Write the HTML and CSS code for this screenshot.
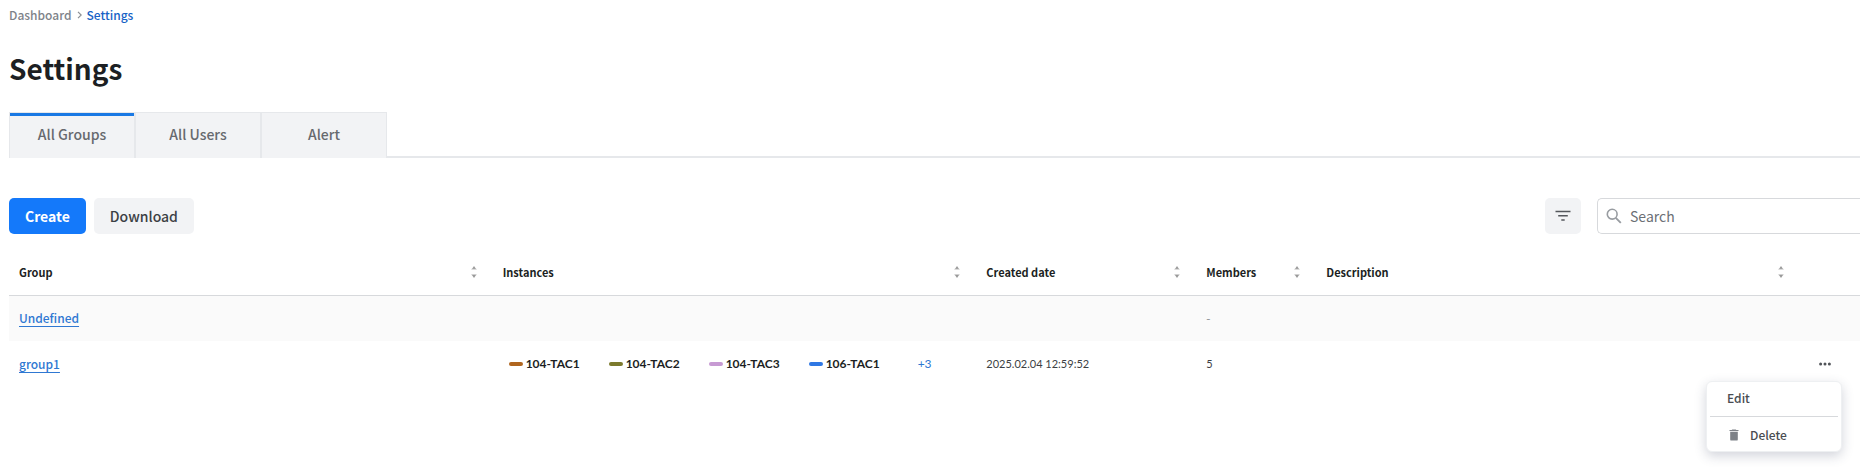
FILE: index.html
```html
<!DOCTYPE html>
<html lang="en">
<head>
<meta charset="utf-8">
<meta name="viewport" content="width=device-width, initial-scale=1">
<title>Settings</title>
<link rel="stylesheet" href="styles.css">
</head>
<body>
<svg class="sprite" aria-hidden="true">
  <symbol id="sort" viewBox="0 0 6 12"><path d="M3 0 5.2 3.2H.8Z" fill="#999"/><path d="M.2 3.3h5.6M.2 8.7h5.6" stroke="#d4d4d4" stroke-width=".8"/><path d="M.8 8.8h4.4L3 12Z" fill="#999"/></symbol>
</svg>
<main class="page">
  <nav class="breadcrumb" aria-label="Breadcrumb">
    <a class="crumb" href="#">Dashboard</a>
    <svg class="chevron" viewBox="0 0 5 8" aria-hidden="true"><path d="M1 .8 4.2 4 1 7.2" fill="none" stroke="#8b8f94" stroke-width="1.2"/></svg>
    <a class="crumb crumb-current" href="#" aria-current="page">Settings</a>
  </nav>

  <h1 class="title">Settings</h1>

  <div class="tabs" role="tablist">
    <button class="tab tab-active" role="tab" aria-selected="true">All Groups</button>
    <button class="tab" role="tab" aria-selected="false">All Users</button>
    <button class="tab" role="tab" aria-selected="false">Alert</button>
  </div>

  <div class="toolbar">
    <button class="btn btn-primary">Create</button>
    <button class="btn">Download</button>
    <button class="btn btn-icon" aria-label="Filter">
      <svg width="16" height="12" viewBox="0 0 16 12" fill="none" stroke="#54575c" stroke-width="1.5" aria-hidden="true"><path d="M.5 1.5h15M3.2 5.8h9.6M6.3 10.1h3.4"/></svg>
    </button>
    <label class="search">
      <svg width="16" height="16" viewBox="0 0 16 16" fill="none" stroke="#989ca1" stroke-width="1.6" aria-hidden="true"><circle cx="6.2" cy="6.2" r="4.9"/><path d="m9.8 9.8 5 5" stroke-width="1.9"/></svg>
      <input class="search-input" type="search" placeholder="Search" aria-label="Search">
    </label>
  </div>

  <table class="table">
    <colgroup><col><col><col class="col-date"><col class="col-members"><col><col class="col-actions"></colgroup>
    <thead>
      <tr>
        <th><div class="head">Group<svg class="sort"><use href="#sort"/></svg></div></th>
        <th><div class="head">Instances<svg class="sort"><use href="#sort"/></svg></div></th>
        <th><div class="head">Created date<svg class="sort"><use href="#sort"/></svg></div></th>
        <th><div class="head">Members<svg class="sort"><use href="#sort"/></svg></div></th>
        <th><div class="head">Description<svg class="sort"><use href="#sort"/></svg></div></th>
        <th></th>
      </tr>
    </thead>
    <tbody>
      <tr class="striped">
        <td><a class="group-link" href="#">Undefined</a></td>
        <td></td><td></td><td class="empty">-</td><td></td><td></td>
      </tr>
      <tr>
        <td><a class="group-link" href="#">group1</a></td>
        <td>
          <div class="instances">
            <span class="instance"><i class="mark mark-orange"></i>104-TAC1</span>
            <span class="instance"><i class="mark mark-olive"></i>104-TAC2</span>
            <span class="instance"><i class="mark mark-pink"></i>104-TAC3</span>
            <span class="instance"><i class="mark mark-blue"></i>106-TAC1</span>
            <a class="more" href="#">+3</a>
          </div>
        </td>
        <td class="value">2025.02.04 12:59:52</td>
        <td class="value">5</td>
        <td></td>
        <td class="cell-actions">
          <div class="actions">
            <button class="dots" aria-label="More actions" aria-expanded="true">
              <svg width="12" height="4" viewBox="0 0 12 4" fill="#505358" aria-hidden="true"><circle cx="1.6" cy="2" r="1.5"/><circle cx="6" cy="2" r="1.5"/><circle cx="10.4" cy="2" r="1.5"/></svg>
            </button>
            <div class="menu" role="menu">
              <button class="menu-item" role="menuitem">Edit</button>
              <hr class="menu-line">
              <button class="menu-item menu-item-icon" role="menuitem">
                <svg width="10" height="12" viewBox="0 0 10 12" fill="#7d8187" aria-hidden="true"><path d="M3.2.4h3.6l.5.6h2.2v1.1H.5V1h2.2ZM1.2 2.8h7.6V10.4a1.2 1.2 0 0 1-1.2 1.2H2.4a1.2 1.2 0 0 1-1.2-1.2Z"/></svg>
                Delete
              </button>
            </div>
          </div>
        </td>
      </tr>
    </tbody>
  </table>
</main>
</body>
</html>
```
FILE: styles.css
```css
* { box-sizing: border-box; }

body {
  margin: 0;
  background: #fff;
  color: #1c1f23;
  font-family: "Noto Sans CJK KR", "Noto Sans", sans-serif;
  font-size: 12px;
  line-height: 20px;
}

button, input { font: inherit; color: inherit; }
button { border: 0; padding: 0; background: none; cursor: pointer; }
a { text-decoration: none; }
.sprite { display: none; }

.page { min-height: 100vh; padding: 5px 0 0 9px; }

.breadcrumb { display: flex; align-items: center; gap: 5px; font-weight: 500; }
.crumb { color: #7e8389; }
.crumb-current { color: #1863c6; }
.chevron { width: 5px; height: 8px; }

.title { margin: 22px 0 23px; font-size: 28px; line-height: 42px; font-weight: 700; }

.tabs { display: flex; border-bottom: 2px solid #e6e8eb; }
.tab {
  width: 126px;
  height: 46px;
  margin-bottom: -2px;
  padding-bottom: 3px;
  border: 1px solid #e6e8eb;
  border-bottom: 0;
  background: #f2f3f5;
  color: #66696e;
  font-size: 14px;
  font-weight: 500;
}
.tab-active { box-shadow: inset 0 3px #1a79e4; }

.toolbar { display: flex; align-items: center; margin-top: 40px; }
.btn {
  height: 36px;
  margin-right: 8px;
  padding: 0 16px 1px;
  border-radius: 5px;
  background: #f2f3f5;
  color: #3c3f44;
  font-size: 14px;
  font-weight: 500;
}
.btn-primary { background: #1479fa; color: #fff; font-weight: 700; }
.btn-icon {
  display: flex;
  align-items: center;
  justify-content: center;
  width: 36px;
  margin: 0 16px 0 auto;
  padding: 0;
}
.search {
  display: flex;
  align-items: center;
  gap: 8px;
  width: 263px;
  height: 36px;
  padding-left: 8px;
  border: 1px solid #d7d9dc;
  border-right: 0;
  border-radius: 5px 0 0 5px;
}
.search-input { flex: 1; min-width: 0; padding: 0; border: 0; outline: 0; background: none; font-size: 14px; }
.search-input::placeholder { color: #6b6f75; opacity: 1; }

.table { width: 100%; margin-top: 16px; border-collapse: collapse; table-layout: fixed; }
.col-date { width: 220px; }
.col-members { width: 120px; }
.col-actions { width: 60px; }
.table th { height: 45px; padding: 0 16px 0 10px; border-bottom: 1px solid #d7d9dc; font-size: 11px; font-weight: 700; text-align: left; }
.table td { height: 46px; padding: 0 10px; }
.head { display: flex; align-items: center; justify-content: space-between; }
.sort { width: 6px; height: 12px; }
.striped { background: #fafafa; }
.group-link { color: #2f78d2; font-weight: 500; text-decoration: underline; text-underline-offset: 3px; }
.empty { color: #8b8f94; }
.table .value { color: #3c3f44; font-family: Lato, sans-serif; font-size: 11px; }

.instances { display: flex; align-items: center; padding-left: 6px; font-family: Lato, sans-serif; font-weight: 700; }
.instance { display: flex; align-items: center; gap: 3px; width: 100px; }
.mark { width: 14px; height: 4px; border-radius: 2px; }
.mark-orange { background: #b0661f; }
.mark-olive { background: #7c7a2d; }
.mark-pink { background: #c79ad3; }
.mark-blue { background: #2f78e4; }
.more { padding-left: 9px; color: #2f78d2; font-weight: 400; }

.table .cell-actions { padding: 0 10px 0 0; }
.actions { position: relative; display: flex; justify-content: center; }
.dots { display: flex; align-items: center; justify-content: center; width: 24px; height: 20px; }
.menu {
  position: absolute;
  top: 27px;
  right: 8px;
  width: 136px;
  padding: 3px;
  border: 1px solid #eef0f2;
  border-radius: 6px;
  background: #fff;
  box-shadow: 0 4px 12px rgba(50, 60, 90, .22);
}
.menu-item { display: flex; align-items: center; gap: 11px; width: 100%; height: 26px; padding-left: 17px; color: #494c51; font-weight: 500; }
.menu-item-icon { padding-left: 19px; }
.menu-line { margin: 5px 0; border: 0; border-top: 1px solid #d7d9dc; }
```
